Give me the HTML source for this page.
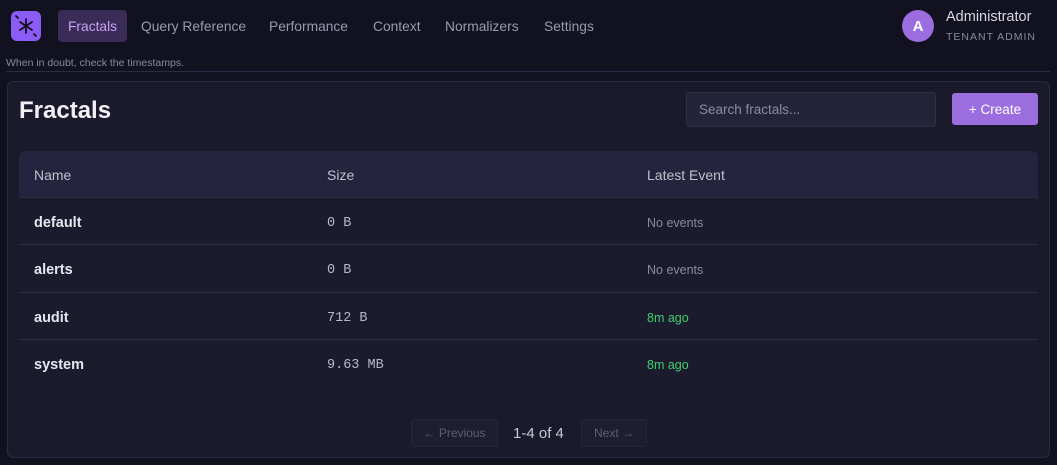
<!DOCTYPE html>
<html><head><style>
*{box-sizing:border-box;margin:0;padding:0}
body{width:1057px;height:465px;background:#12111f;font-family:"Liberation Sans",sans-serif;color:#e6e6ee;position:relative;overflow:hidden}
.abs{position:absolute}
.nav a{position:absolute;top:11px;height:32px;line-height:32px;font-size:13.8px;color:#9a9ab0;padding:0 10px}
.mono{font-family:"Liberation Mono",monospace;font-size:13.5px;color:#b8b8c8}
.row{position:absolute;left:0;right:0;height:47px;border-top:1px solid #2c2c45}
.row div{position:absolute;top:2px;line-height:47px}
</style></head><body>
<div class="abs" style="left:11px;top:11px;width:30px;height:30px;border-radius:6px;background:#8b5cf6">
<svg width="30" height="30" viewBox="0 0 30 30" stroke="#15121f" stroke-width="1.8" stroke-linecap="round"><path d="M15 8v14M9 11l12 8M21 11l-12 8M5 5l2 2M23 23l2 2"/></svg></div>
<div class="nav">
<a style="left:58px;top:10px;background:#3a2b57;color:#c7a3f2;border-radius:4px;line-height:34px">Fractals</a>
<a style="left:131px">Query Reference</a>
<a style="left:259px">Performance</a>
<a style="left:363px">Context</a>
<a style="left:435px">Normalizers</a>
<a style="left:534px">Settings</a>
</div>
<div class="abs" style="left:902px;top:10px;width:32px;height:32px;border-radius:50%;background:#9b6ddf;color:#fff;font-weight:bold;font-size:15px;text-align:center;line-height:34px">A</div>
<div class="abs" style="left:946px;top:9px;font-size:14.5px;color:#d8d8e2">Administrator</div>
<div class="abs" style="left:946px;top:31px;font-size:10.5px;letter-spacing:1px;color:#8a8aa0">TENANT ADMIN</div>
<div class="abs" style="left:6px;top:57px;font-size:10.5px;color:#8a8a9c">When in doubt, check the timestamps.</div>
<div class="abs" style="left:6px;top:71px;width:1044px;height:1px;background:#2c2b45"></div>
<div class="abs" style="left:7px;top:81px;width:1043px;height:377px;background:#1a1a2c;border:1px solid #2a2a42;border-radius:6px">
<div class="abs" style="left:11px;top:15px;font-size:24px;font-weight:bold;color:#f0f0f5">Fractals</div>
<div class="abs" style="left:678px;top:10px;width:250px;height:35px;background:#23233a;border:1px solid #2e2e48;border-radius:3px;font-size:13.5px;color:#8a8aa0;line-height:33px;padding-left:12px">Search fractals...</div>
<div class="abs" style="left:944px;top:11px;width:86px;height:32px;background:#9b6ddf;border-radius:3px;color:#fff;font-size:13.5px;text-align:center;line-height:34px">+ Create</div>
<div class="abs" style="left:11px;top:69px;width:1019px;height:237px;background:#1b1b2d;border-radius:6px;overflow:hidden">
<div class="abs" style="left:0;top:0;right:0;height:46px;background:#24243e;font-size:14px;color:#c0c0d0;line-height:48px">
<span class="abs" style="left:15px">Name</span><span class="abs" style="left:308px">Size</span><span class="abs" style="left:628px">Latest Event</span></div>
<div class="row" style="top:46px"><div style="left:15px;font-weight:bold;font-size:14.5px">default</div><div class="mono" style="left:308px">0 B</div><div style="left:628px;font-size:12.5px;color:#8a8a9c">No events</div></div>
<div class="row" style="top:93px"><div style="left:15px;font-weight:bold;font-size:14.5px">alerts</div><div class="mono" style="left:308px">0 B</div><div style="left:628px;font-size:12.5px;color:#8a8a9c">No events</div></div>
<div class="row" style="top:141px"><div style="left:15px;font-weight:bold;font-size:14.5px">audit</div><div class="mono" style="left:308px">712 B</div><div style="left:628px;font-size:12.5px;color:#3fcf6f">8m ago</div></div>
<div class="row" style="top:188px"><div style="left:15px;font-weight:bold;font-size:14.5px">system</div><div class="mono" style="left:308px">9.63 MB</div><div style="left:628px;font-size:12.5px;color:#3fcf6f">8m ago</div></div>
</div>
<div class="abs" style="left:403px;top:337px;width:87px;height:28px;border:1px solid #262639;background:#1e1e30;border-radius:3px;font-size:12px;color:#5e5e74;text-align:center;line-height:26px">← Previous</div>
<div class="abs" style="left:505px;top:343px;font-size:15px;color:#c8c8d4">1-4 of 4</div>
<div class="abs" style="left:573px;top:337px;width:66px;height:28px;border:1px solid #262639;background:#1e1e30;border-radius:3px;font-size:12px;color:#5e5e74;text-align:center;line-height:26px">Next →</div>
</div>
</body></html>
